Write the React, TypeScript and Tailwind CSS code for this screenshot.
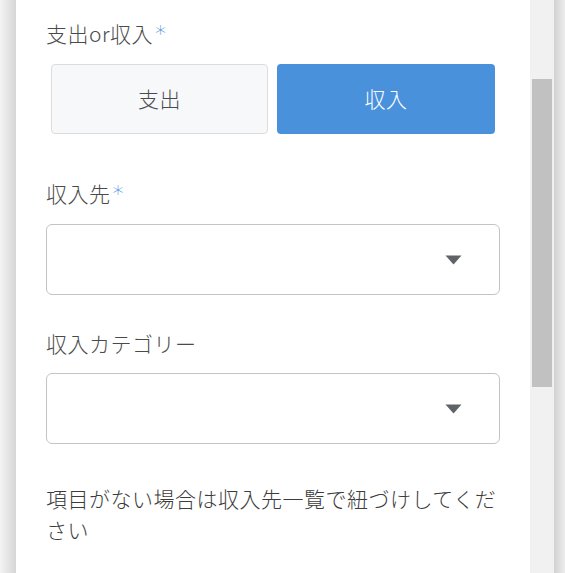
import React from "react";

const font = { fontFamily: '"Noto Sans CJK JP", "Noto Sans", sans-serif' };

function Arrow() {
  return (
    <svg width="17" height="10" viewBox="0 0 17 10" className="block">
      <path d="M0.5 0.5 H16.5 L8.5 9.5 Z" fill="#5f6368" />
    </svg>
  );
}

function Select() {
  return (
    <div className="h-[71px] w-full rounded-[6px] border border-[#c4c4c4] bg-white flex items-center justify-end pr-[37px]">
      <Arrow />
    </div>
  );
}

function Label({ text, required }: { text: string; required?: boolean }) {
  return (
    <div className="relative top-[-2px] h-[30px] leading-[30px] text-[21px] tracking-[0.5px] font-light text-[#4a4a4a] whitespace-nowrap">
      {text}
      {required && (
        <span
          className="text-[#4a90d9] text-[22px] ml-[2px] relative top-[-1px]"
          style={{ fontFamily: '"DejaVu Sans", sans-serif' }}
        >
          *
        </span>
      )}
    </div>
  );
}

export default function App() {
  return (
    <div className="flex h-[573px] w-[565px] overflow-hidden bg-[#f1f1f1]" style={font}>
      <div className="w-[16px] h-full bg-gradient-to-r from-[#f4f4f4] to-[#d6d6d6]" />
      <div className="w-[514px] h-full bg-white px-[30px] pt-[20px]">
        <Label text="支出or収入" required />
        <div className="mt-[14px] flex gap-[9px] px-[5px]">
          <div className="w-[217px] h-[70px] rounded-[4px] border border-[#dcdcdc] bg-[#f7f8fa] flex items-center justify-center text-[21px] tracking-[0.5px] font-light text-[#4a4a4a]">
            支出
          </div>
          <div className="w-[218px] h-[70px] rounded-[4px] bg-[#4a91dc] flex items-center justify-center text-[21px] tracking-[0.5px] font-light text-white">
            収入
          </div>
        </div>
        <div className="mt-[46px]">
          <Label text="収入先" required />
        </div>
        <div className="mt-[14px]">
          <Select />
        </div>
        <div className="mt-[35px]">
          <Label text="収入カテゴリー" />
        </div>
        <div className="mt-[13px]">
          <Select />
        </div>
        <p className="mt-[39px] text-[21px] tracking-[0.5px] font-light leading-[31px] text-[#3c3c3c]">
          項目がない場合は収入先一覧で紐づけしてください
        </p>
      </div>
      <div className="w-[24px] h-full bg-[#f1f1f1] px-[2px] pt-[79px]">
        <div className="h-[308px] w-full bg-[#c1c1c1]" />
      </div>
      <div className="w-[11px] h-full bg-gradient-to-r from-[#d2d2d2] to-[#ededed]" />
    </div>
  );
}
